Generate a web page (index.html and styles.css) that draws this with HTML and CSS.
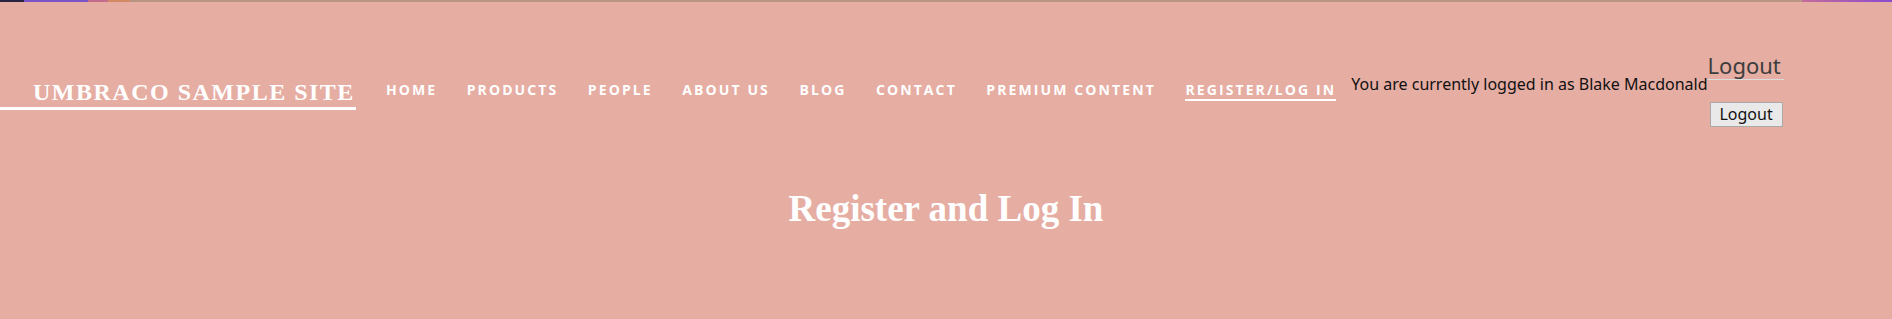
FILE: index.html
```html
<!DOCTYPE html>
<html lang="en">
<head>
<meta charset="utf-8">
<title>Register and Log In</title>
<link rel="stylesheet" href="styles.css">
</head>
<body>
<div class="topstrip"></div>
<header class="site-header">
  <a class="logo" href="#">Umbraco Sample Site</a>
  <nav class="main-nav">
    <ul class="nav-list">
      <li><a class="nav-link" href="#">Home</a></li>
      <li><a class="nav-link" href="#">Products</a></li>
      <li><a class="nav-link" href="#">People</a></li>
      <li><a class="nav-link" href="#">About Us</a></li>
      <li><a class="nav-link" href="#">Blog</a></li>
      <li><a class="nav-link" href="#">Contact</a></li>
      <li><a class="nav-link" href="#">Premium Content</a></li>
      <li><a class="nav-link active" href="#">Register/Log In</a></li>
    </ul>
  </nav>
  <p class="status">You are currently logged in as Blake Macdonald</p>
  <div class="logout-box">
    <h3 class="logout-title">Logout</h3>
    <form class="logout-form">
      <button class="logout-btn" type="button">Logout</button>
    </form>
  </div>
</header>
<main class="page">
  <h1 class="page-title">Register and Log In</h1>
</main>
</body>
</html>
```

FILE: styles.css
```css
html, body {
  margin: 0;
  padding: 0;
}

body {
  background: #e6ada3;
  font-family: "Noto Sans", "Open Sans", sans-serif;
  height: 319px;
  overflow: hidden;
}

.topstrip {
  height: 2px;
  background:
    linear-gradient(to right,
      #2b2440 0, #2b2440 24px,
      #7a55c8 24px, #7a55c8 88px,
      #c46c8c 88px, #c46c8c 108px,
      #d28a62 108px, #d28a62 130px,
      transparent 130px),
    linear-gradient(to right, transparent 0, transparent calc(100% - 90px), #c46c9c calc(100% - 90px), #8a4ad0 100%),
    #b89585;
}

.site-header {
  display: flex;
  align-items: flex-start;
}

.logo {
  display: block;
  margin-top: 78px;
  padding: 0 1px 3px 33px;
  border-bottom: 3px solid #fff;
  font-family: "Liberation Serif", "Times New Roman", serif;
  font-weight: bold;
  font-size: 24px;
  line-height: 24px;
  letter-spacing: 1.5px;
  text-transform: uppercase;
  color: #fff;
  text-decoration: none;
  white-space: nowrap;
}

.main-nav {
  margin-top: 79px;
  margin-left: 30px;
}

.nav-list {
  display: flex;
  gap: 29.5px;
  list-style: none;
  margin: 0;
  padding: 0;
}

.nav-link {
  display: block;
  font-family: "Open Sans", "Noto Sans", sans-serif;
  font-weight: bold;
  font-size: 14px;
  line-height: 18px;
  letter-spacing: 2.1px;
  text-transform: uppercase;
  color: #fff;
  text-decoration: none;
  border-bottom: 2px solid transparent;
  white-space: nowrap;
}

.nav-link.active {
  border-bottom-color: #fff;
}

.status {
  margin: 71px 0 0 15px;
  font-size: 16px;
  line-height: 22px;
  color: #111;
  white-space: nowrap;
}

.logout-box {
  margin-top: 50px;
  width: 76px;
}

.logout-title {
  margin: 0 0 22px;
  padding-bottom: 1px;
  border-bottom: 1px solid #dcdcdc;
  font-size: 22px;
  line-height: 26px;
  font-weight: normal;
  color: #3d3d3d;
}

.logout-form {
  margin: 0;
}

.logout-btn {
  margin: 0 0 0 2px;
  width: 73px;
  height: 25px;
  padding: 0 6px;
  font-family: "Noto Sans", sans-serif;
  font-size: 16px;
  line-height: 21px;
  color: #111;
  background: #e9e9e9;
  border: 1px solid #a9a9a9;
  border-radius: 0;
}

.page {
  text-align: center;
}

.page-title {
  margin: 61px 0 0;
  font-family: "Liberation Serif", "Times New Roman", serif;
  font-weight: bold;
  font-size: 37px;
  line-height: 41px;
  color: #fff;
}
```
